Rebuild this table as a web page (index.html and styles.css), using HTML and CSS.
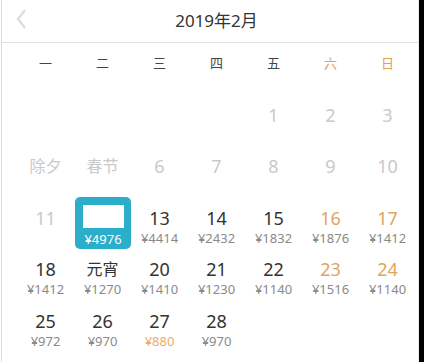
FILE: index.html
```html
<!DOCTYPE html>
<html>
<head>
<meta charset="utf-8">
<link rel="stylesheet" href="styles.css">
</head>
<body>
<div class="page">
  <div class="cal">
    <div class="header">
      <svg class="back" width="12" height="22" viewBox="0 0 12 22"><polyline points="9,2 2,11 9,20" fill="none" stroke="#dcdcdc" stroke-width="2.2"/></svg>
      <div class="title">2019年2月</div>
    </div>
    <div class="weekdays">
      <span>一</span><span>二</span><span>三</span><span>四</span><span>五</span><span class="we">六</span><span class="we">日</span>
    </div>
    <div class="grid">
      <div class="cell"></div><div class="cell"></div><div class="cell"></div><div class="cell"></div>
      <div class="cell off"><div class="d">1</div></div>
      <div class="cell off"><div class="d">2</div></div>
      <div class="cell off"><div class="d">3</div></div>

      <div class="cell off"><div class="d cn">除夕</div></div>
      <div class="cell off"><div class="d cn">春节</div></div>
      <div class="cell off"><div class="d">6</div></div>
      <div class="cell off"><div class="d">7</div></div>
      <div class="cell off"><div class="d">8</div></div>
      <div class="cell off"><div class="d">9</div></div>
      <div class="cell off"><div class="d">10</div></div>

      <div class="cell off"><div class="d">11</div></div>
      <div class="cell"><div class="sel"><div class="blank"></div><div class="p">¥4976</div></div></div>
      <div class="cell"><div class="d">13</div><div class="p">¥4414</div></div>
      <div class="cell"><div class="d">14</div><div class="p">¥2432</div></div>
      <div class="cell"><div class="d">15</div><div class="p">¥1832</div></div>
      <div class="cell wk"><div class="d">16</div><div class="p">¥1876</div></div>
      <div class="cell wk"><div class="d">17</div><div class="p">¥1412</div></div>

      <div class="cell"><div class="d">18</div><div class="p">¥1412</div></div>
      <div class="cell"><div class="d cn">元宵</div><div class="p">¥1270</div></div>
      <div class="cell"><div class="d">20</div><div class="p">¥1410</div></div>
      <div class="cell"><div class="d">21</div><div class="p">¥1230</div></div>
      <div class="cell"><div class="d">22</div><div class="p">¥1140</div></div>
      <div class="cell wk"><div class="d">23</div><div class="p">¥1516</div></div>
      <div class="cell wk"><div class="d">24</div><div class="p">¥1140</div></div>

      <div class="cell"><div class="d">25</div><div class="p">¥972</div></div>
      <div class="cell"><div class="d">26</div><div class="p">¥970</div></div>
      <div class="cell"><div class="d">27</div><div class="p low">¥880</div></div>
      <div class="cell"><div class="d">28</div><div class="p">¥970</div></div>
    </div>
  </div>
</div>
</body>
</html>
```
FILE: styles.css
```css
html, body {
  margin: 0;
  padding: 0;
}
body {
  background: #000;
  font-family: "Noto Sans", "Noto Sans CJK SC", sans-serif;
  color: #333;
}
.page {
  width: 419px;
  height: 362px;
  background: #fff;
  padding-left: 1px;
  box-sizing: border-box;
}
.cal {
  height: 362px;
  border-left: 1px solid #dedede;
  border-right: 1px solid #ececec;
  box-sizing: border-box;
}
.header {
  height: 43px;
  border-bottom: 1px solid #e0e0e0;
  box-sizing: border-box;
  display: flex;
  align-items: center;
  position: relative;
}
.back {
  position: absolute;
  left: 14px;
  top: 8px;
}
.title {
  flex: 1;
  text-align: center;
  font-size: 17px;
  line-height: 38px;
  padding-left: 13px;
  color: #333;
}
.weekdays {
  display: grid;
  grid-template-columns: repeat(7, 57px);
  margin-left: 15px;
  height: 38px;
  align-items: center;
  font-size: 13px;
  text-align: center;
  color: #444;
}
.weekdays .we {
  color: #dea14f;
}
.grid {
  display: grid;
  grid-template-columns: repeat(7, 57px);
  grid-auto-rows: 51.5px;
  margin-left: 15px;
  margin-top: 15.5px;
  text-align: center;
}
.cell {
  padding-top: 6px;
  box-sizing: border-box;
}
.d {
  font-size: 18px;
  line-height: 24px;
  color: #333;
}
.d.cn {
  font-size: 16px;
}
.p {
  font-size: 13px;
  line-height: 16px;
  color: #8a8a8a;
}
.p.low {
  color: #f2a86a;
}
.off .d {
  color: #c9c9c9;
}
.wk .d {
  color: #e0a561;
}
.sel {
  margin: -9px 0 0 1px;
  height: 52px;
  background: #2aaec9;
  border-radius: 5px;
  padding-top: 8px;
  box-sizing: border-box;
}
.sel .blank {
  width: 41px;
  height: 23px;
  background: #fff;
  margin: 0 auto 3px;
}
.sel .p {
  color: #fff;
  font-size: 13px;
  line-height: 16px;
}
```
